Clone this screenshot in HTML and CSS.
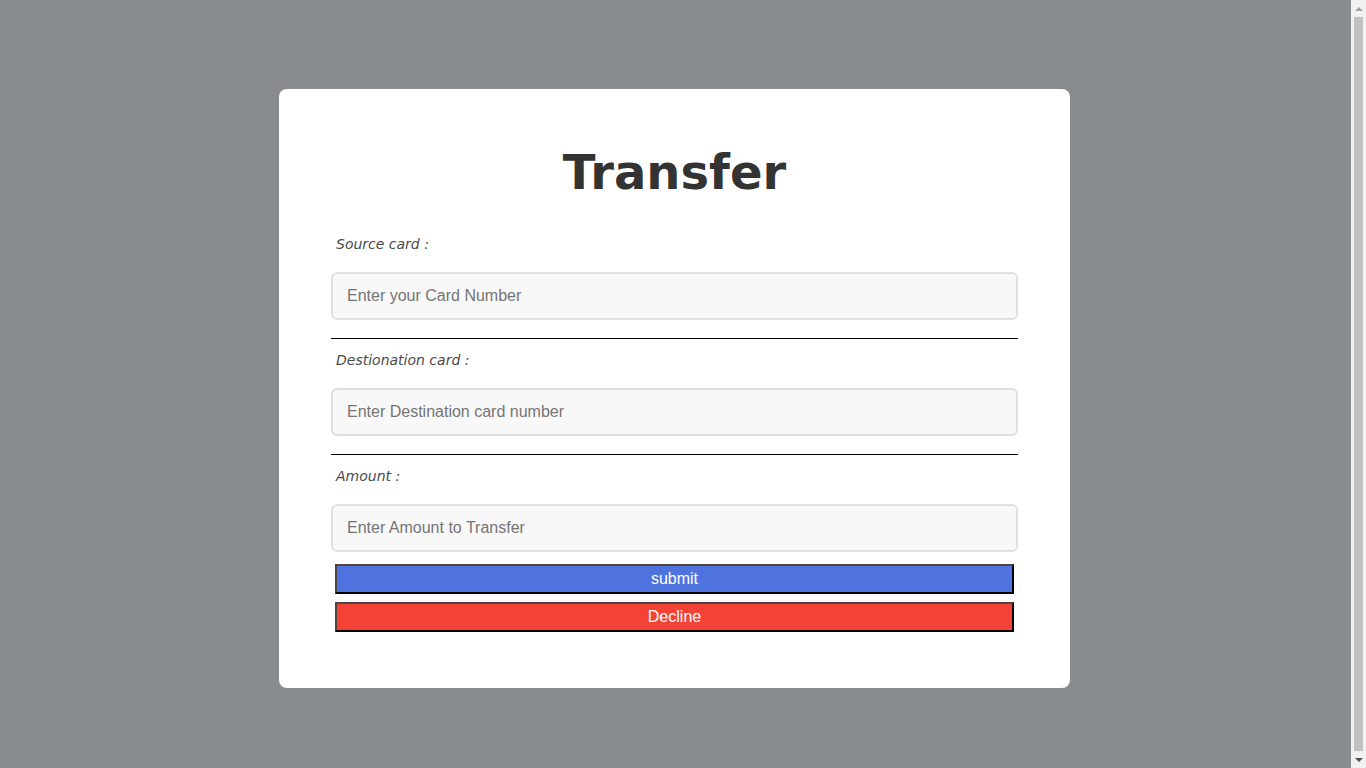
FILE: index.html
```html
<!DOCTYPE html>
<html lang="en">
<head>
<meta charset="utf-8">
<title>Transfer</title>
<link rel="stylesheet" href="styles.css">
</head>
<body>
<div class="page">
  <form class="card">
    <h1 class="title">Transfer</h1>
    <div class="field">
      <label class="label">Source card :</label>
      <input class="input" type="text" placeholder="Enter your Card Number">
    </div>
    <div class="rule"></div>
    <div class="field">
      <label class="label">Destionation card :</label>
      <input class="input" type="text" placeholder="Enter Destination card number">
    </div>
    <div class="rule"></div>
    <div class="field">
      <label class="label">Amount :</label>
      <input class="input" type="text" placeholder="Enter Amount to Transfer">
    </div>
    <div class="actions">
      <button type="button" class="btn btn-submit">submit</button>
      <button type="button" class="btn btn-decline">Decline</button>
    </div>
  </form>
</div>
<div class="scrollbar" aria-hidden="true">
  <div class="scroll-arrow scroll-up"></div>
  <div class="scroll-thumb"></div>
  <div class="scroll-arrow scroll-down"></div>
</div>
</body>
</html>
```

FILE: styles.css
```css
html {
  background: #898c8f;
}

body {
  margin: 0;
  padding: 8px 23px 0 8px;
  background: #898c8f;
  font-family: "Liberation Sans", Arial, sans-serif;
}

.page {
  display: flex;
  justify-content: center;
  align-items: flex-start;
}

.card {
  width: 791px;
  box-sizing: border-box;
  margin-top: 81px;
  margin-right: 2px;
  padding: 55px 52px 56px;
  background: #ffffff;
  border-radius: 8px;
  display: flex;
  flex-direction: column;
}

.title {
  margin: 0 0 36px;
  font-family: "DejaVu Sans", Verdana, sans-serif;
  font-weight: bold;
  font-size: 48px;
  line-height: 56px;
  color: #333333;
  text-align: center;
}

.field {
  display: flex;
  flex-direction: column;
}

.label {
  display: block;
  height: 16px;
  padding-left: 5px;
  margin-bottom: 20px;
  font-family: "DejaVu Sans", Verdana, sans-serif;
  font-style: italic;
  font-size: 14px;
  line-height: 16px;
  color: #4a4a4a;
}

.input {
  box-sizing: border-box;
  width: 100%;
  height: 48px;
  margin: 0;
  padding: 0 14px;
  border: 2px solid #e0e0e0;
  border-radius: 6px;
  background: #f8f8f8;
  font-family: "Liberation Sans", Arial, sans-serif;
  font-size: 16px;
  color: #333333;
  outline: none;
}

.input::placeholder {
  color: #757575;
  opacity: 1;
}

.rule {
  height: 1px;
  background: #000000;
  margin: 18px 0 13px;
}

.actions {
  display: flex;
  flex-direction: column;
  gap: 8px;
  margin: 12px 4px 0;
}

.btn {
  box-sizing: border-box;
  width: 100%;
  height: 30px;
  margin: 0;
  padding: 0;
  border-width: 2px;
  border-style: solid;
  border-color: #4f4541 #000000 #000000 #4f4541;
  font-family: "Liberation Sans", Arial, sans-serif;
  font-size: 16px;
  line-height: 26px;
  color: #ffffff;
  text-align: center;
  cursor: pointer;
}

.btn-submit {
  background: #4e73de;
}

.btn-decline {
  background: #f44336;
}

/* imitation of the browser's vertical scrollbar */
.scrollbar {
  position: fixed;
  top: 0;
  right: 0;
  bottom: 0;
  width: 15px;
  background: #f1f1f1;
  display: flex;
  flex-direction: column;
  align-items: center;
}

.scroll-arrow {
  width: 15px;
  height: 17px;
  display: flex;
  justify-content: center;
  align-items: center;
  flex: none;
}

.scroll-up::before,
.scroll-down::before {
  content: "";
  width: 0;
  height: 0;
  border-left: 4px solid transparent;
  border-right: 4px solid transparent;
}

.scroll-up::before {
  border-bottom: 4px solid #a3a3a3;
}

.scroll-down::before {
  border-top: 4px solid #505050;
}

.scroll-thumb {
  flex: 1;
  width: 9px;
  margin: 0 0 0;
  background: #c1c1c1;
}
```
